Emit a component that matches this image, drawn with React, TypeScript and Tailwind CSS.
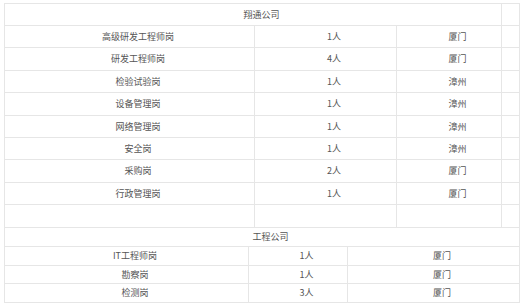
const xiangtong = [
  { name: '高级研发工程师岗', count: '1人', city: '厦门' },
  { name: '研发工程师岗', count: '4人', city: '厦门' },
  { name: '检验试验岗', count: '1人', city: '漳州' },
  { name: '设备管理岗', count: '1人', city: '漳州' },
  { name: '网络管理岗', count: '1人', city: '漳州' },
  { name: '安全岗', count: '1人', city: '漳州' },
  { name: '采购岗', count: '2人', city: '厦门' },
  { name: '行政管理岗', count: '1人', city: '厦门' },
];

const gongcheng = [
  { name: 'IT工程师岗', count: '1人', city: '厦门' },
  { name: '勘察岗', count: '1人', city: '厦门' },
  { name: '检测岗', count: '3人', city: '厦门' },
];

const cell = 'border border-[#e6e6e6] pl-[17px] pr-0 py-0 text-center align-middle';

export default function App() {
  return (
    <div
      className="min-h-[305px] w-[523px] bg-white pl-[4px] pt-[3px] text-[9px] text-[#555]"
      style={{ fontFamily: '"Noto Sans CJK SC", "Liberation Sans", sans-serif' }}
    >
      <table className="w-[515px] table-fixed border-collapse">
        <colgroup>
          <col className="w-[250px]" />
          <col className="w-[142px]" />
          <col className="w-[105px]" />
          <col className="w-[18px]" />
        </colgroup>
        <tbody>
          <tr className="h-[22px]">
            <td colSpan={3} className={cell}>翔通公司</td>
            <td className={cell}></td>
          </tr>
          {xiangtong.map((r) => (
            <tr key={r.name} className="h-[22.4px]">
              <td className={cell}>{r.name}</td>
              <td className={cell}>{r.count}</td>
              <td className={cell}>{r.city}</td>
              <td className={cell}></td>
            </tr>
          ))}
          <tr className="h-[22.4px]">
            <td className={cell}></td>
            <td className={cell}></td>
            <td className={cell}></td>
            <td className={cell}></td>
          </tr>
        </tbody>
      </table>
      <table className="w-[515px] table-fixed border-collapse">
        <colgroup>
          <col className="w-[244px]" />
          <col className="w-[99px]" />
          <col className="w-[172px]" />
        </colgroup>
        <tbody>
          <tr className="h-[19px]">
            <td colSpan={3} className={`${cell} border-t-0`}>工程公司</td>
          </tr>
          {gongcheng.map((r) => (
            <tr key={r.name} className="h-[18.7px]">
              <td className={cell}>{r.name}</td>
              <td className={cell}>{r.count}</td>
              <td className={cell}>{r.city}</td>
            </tr>
          ))}
        </tbody>
      </table>
    </div>
  );
}
